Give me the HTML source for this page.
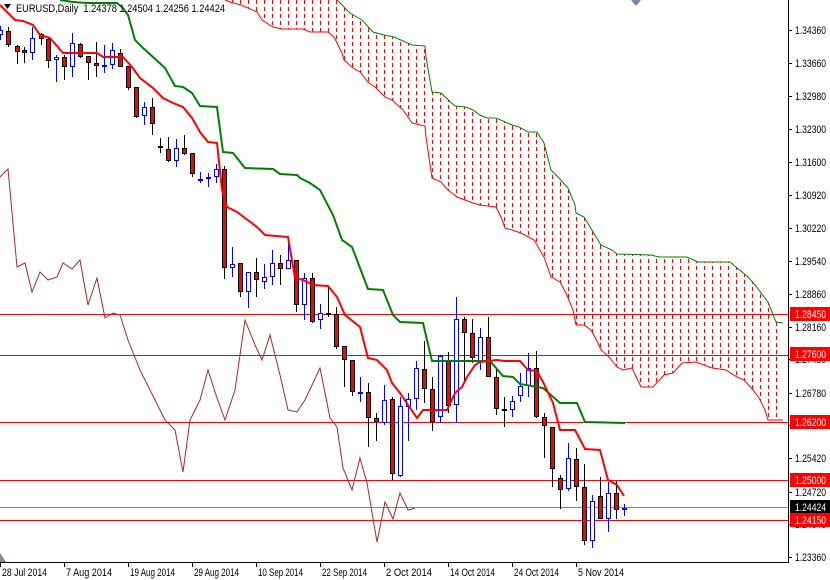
<!DOCTYPE html>
<html><head><meta charset="utf-8">
<style>
html,body{margin:0;padding:0;background:#fff;}
body{width:830px;height:580px;overflow:hidden;position:relative;font-family:"Liberation Sans",sans-serif;}
svg{position:absolute;left:0;top:0;}
svg text{font-family:"Liberation Sans",sans-serif;font-size:11px;}
</style></head>
<body>
<svg id="s" width="830" height="580" viewBox="0 0 830 580" xmlns="http://www.w3.org/2000/svg">
<defs>
<clipPath id="cl"><polygon id="cloudpoly" points=""/></clipPath>
</defs>
<g id="cloudlines" clip-path="url(#cl)"></g>
<g id="hl"></g>
<polyline id="spanB" fill="none" stroke="#008000" stroke-width="1"/>
<polyline id="spanA" fill="none" stroke="#ff0000" stroke-width="1"/>
<polyline id="chikou" fill="none" stroke="#a52a2a" stroke-width="1"/>
<g id="candles"></g>
<polyline id="kijun" fill="none" stroke="#008000" stroke-width="2"/>
<polyline id="tenkan" fill="none" stroke="#ff0000" stroke-width="2"/>
<line x1="788.5" y1="0" x2="788.5" y2="563" stroke="#000"/>
<line x1="0" y1="562.5" x2="789" y2="562.5" stroke="#000"/>
<g id="axis"></g>
<polygon points="4,4 11,4 7.5,9" fill="#000"/>
<text x="16" y="12" fill="#000" textLength="209" lengthAdjust="spacingAndGlyphs">EURUSD,Daily&#160;&#160;1.24378 1.24504 1.24256 1.24424</text>
<polygon points="631,0 641,0 636,6" fill="#7b8a9a"/>
<polygon points="0,553 0,562 6,562" fill="#7b8a9a"/>
</svg>
<script>
(function(){
var NS="http://www.w3.org/2000/svg";
var s=document.getElementById('s');
function el(t,a,p){var e=document.createElementNS(NS,t);for(var k in a)e.setAttribute(k,a[k]);(p||s).appendChild(e);return e;}
function pts(a){return a.map(function(p){return p.join(',');}).join(' ');}
var topE=[[225,0],[337,0],[350,13],[362,20],[373,32],[384,35],[394,37],[412,45],[425,46],[426,57],[432,92],[441,93],[455,106],[466,107],[473,110],[480,115],[487,118],[496,118],[512,125],[519,127],[528,132],[537,132],[544,143],[551,170],[559,178],[568,188],[575,205],[576,213],[584,217],[601,245],[612,250],[617,254],[651,255],[659,257],[687,257],[698,262],[730,262],[748,277],[755,285],[768,302],[776,322],[783,323]];
var botE=[[225,0],[230,2],[241,5],[257,12],[262,20],[273,27],[282,29],[303,29],[310,32],[328,32],[334,37],[342,53],[344,60],[353,68],[360,72],[368,82],[376,88],[385,97],[392,100],[403,110],[412,123],[425,126],[426,137],[432,178],[441,182],[448,190],[457,197],[473,203],[480,205],[496,207],[501,217],[505,228],[512,230],[521,233],[534,240],[537,245],[544,257],[551,277],[560,282],[566,293],[573,310],[576,325],[584,325],[591,330],[598,343],[601,350],[609,357],[617,367],[623,370],[632,368],[641,387],[653,387],[664,375],[673,373],[682,363],[696,362],[712,368],[726,370],[737,377],[744,380],[753,390],[759,398],[765,410],[768,420],[783,420]];
document.getElementById('cloudpoly').setAttribute('points',pts(topE.concat(botE.slice().reverse())));
var cg=document.getElementById('cloudlines');
for(var x=224;x<=784;x+=8){el('line',{x1:x+0.5,y1:0,x2:x+0.5,y2:430,stroke:'#ff0000','stroke-width':1,'stroke-dasharray':'4,3'},cg);}
document.getElementById('spanB').setAttribute('points',pts(topE.slice(1)));
document.getElementById('spanA').setAttribute('points',pts(botE));
var hg=document.getElementById('hl');
[[314,'#ff0000'],[355,'#ff0000'],[422,'#ff0000'],[480,'#ff0000'],[507,'#778899'],[520,'#ff0000']].forEach(function(h){el('line',{x1:0,y1:h[0]+0.5,x2:788,y2:h[0]+0.5,stroke:h[1]},hg);});
document.getElementById('chikou').setAttribute('points',pts([[0,177],[8,169],[17,267],[25,263],[32,292],[40,272],[48,280],[57,277],[63,263],[72,269],[80,260],[88,305],[97,278],[105,318],[113,313],[120,315],[128,340],[140,370],[155,400],[165,420],[175,430],[183,472],[190,420],[200,400],[208,370],[216,395],[225,420],[235,390],[245,320],[255,345],[262,360],[270,335],[280,375],[288,410],[297,412],[305,400],[320,368],[330,418],[337,427],[343,468],[352,490],[360,458],[367,483],[377,542],[385,502],[393,519],[400,493],[408,510],[415,508]]));
document.getElementById('tenkan').setAttribute('points',pts([[0,5],[15,20],[23,21],[33,25],[40,35],[50,38],[63,53],[97,53],[103,57],[123,57],[132,67],[140,78],[153,88],[163,98],[173,103],[183,107],[192,118],[200,132],[208,142],[217,143],[222,190],[227,207],[237,212],[245,218],[257,227],[265,235],[288,237],[295,278],[303,280],[313,285],[328,286],[337,297],[345,315],[360,327],[368,358],[377,360],[387,370],[392,383],[400,393],[408,405],[417,418],[423,410],[447,410],[455,393],[462,387],[467,377],[475,365],[480,362],[488,361],[497,360],[505,361],[520,361],[528,370],[537,371],[543,382],[553,403],[560,430],[575,430],[585,449],[600,450],[608,480],[617,485],[624,496]]));
document.getElementById('kijun').setAttribute('points',pts([[60,0],[73,2],[87,3],[117,3],[123,8],[128,15],[135,40],[143,48],[153,57],[165,68],[175,86],[183,87],[192,93],[200,106],[217,107],[223,152],[233,153],[245,168],[273,169],[280,174],[297,175],[300,178],[310,183],[320,190],[333,215],[342,240],[352,247],[368,289],[383,290],[393,315],[400,322],[423,323],[432,361],[490,361],[503,376],[513,377],[520,384],[543,388],[560,403],[577,403],[585,422],[625,423]]));
var C=[[0,30,35,26,40,'b'],[8,31,45,27,47,'r'],[17,46,52,45,64,'r'],[24,50,53,47,63,'r'],[32,38,53,27,60,'b'],[41,34,39,33,45,'r'],[48,39,61,37,68,'r'],[56,57,60,55,82,'b'],[64,57,67,55,80,'r'],[72,43,67,33,77,'b'],[80,44,57,43,58,'r'],[88,56,63,56,80,'r'],[96,63,66,42,77,'r'],[104,65,66,45,73,'b'],[112,50,65,43,69,'b'],[120,53,67,49,67,'r'],[128,66,88,66,90,'r'],[136,87,117,87,118,'r'],[144,107,116,102,125,'b'],[152,107,124,98,135,'r'],[160,146,148,138,153,'r'],[168,149,161,137,162,'r'],[176,148,161,139,167,'b'],[184,148,154,135,155,'r'],[192,153,174,153,177,'r'],[200,179,180,172,183,'b'],[208,177,179,173,187,'b'],[216,169,177,164,183,'b'],[224,169,268,166,279,'r'],[232,264,268,247,277,'b'],[240,263,292,263,297,'r'],[248,272,292,272,308,'b'],[256,272,280,258,297,'r'],[264,277,282,264,289,'b'],[272,263,277,250,285,'b'],[280,263,269,255,285,'r'],[288,260,269,243,269,'b'],[296,260,305,260,312,'r'],[304,278,305,273,320,'b'],[312,278,322,273,323,'r'],[320,313,320,304,329,'b'],[328,313,314,287,317,'r'],[336,314,347,307,349,'r'],[344,346,360,346,387,'r'],[352,360,392,360,396,'r'],[360,392,393,377,402,'b'],[368,392,418,383,447,'r'],[376,418,422,413,441,'r'],[384,400,423,385,425,'b'],[392,399,474,397,480,'r'],[400,406,476,397,477,'b'],[408,399,407,393,441,'b'],[416,368,399,361,410,'b'],[424,369,389,341,403,'r'],[432,389,422,377,431,'r'],[440,356,417,355,423,'b'],[448,361,406,352,413,'r'],[456,319,405,297,423,'b'],[464,319,333,317,383,'r'],[472,333,358,319,363,'r'],[480,337,361,328,370,'b'],[488,337,377,317,377,'r'],[496,377,409,369,415,'r'],[504,409,411,397,427,'r'],[512,401,410,396,417,'b'],[520,386,396,373,402,'b'],[528,368,386,353,397,'b'],[536,368,417,351,418,'r'],[544,417,426,413,458,'r'],[552,427,469,427,487,'r'],[560,478,490,475,509,'r'],[568,458,489,443,491,'b'],[576,459,487,448,501,'r'],[584,487,541,464,545,'r'],[592,501,541,495,548,'b'],[600,496,519,477,519,'r'],[608,493,519,482,532,'b'],[616,493,510,481,519,'r'],[624,508,510,504,516,'b']];
var cg2=document.getElementById('candles');
C.forEach(function(c){var x=c[0],bt=c[1],bb=c[2],h=c[3],l=c[4],col=c[5];var ol=col==='r'?'#000':'#0000ff';
el('rect',{x:x,y:h,width:1,height:Math.max(1,l-h),fill:ol},cg2);
var hh=Math.max(2,bb-bt);
el('rect',{x:x-2,y:bt,width:5,height:hh,fill:ol},cg2);
if(hh>2)el('rect',{x:x-1,y:bt+1,width:3,height:hh-2,fill:col==='r'?'#ff0000':'#fff'},cg2);
});
var ag=document.getElementById('axis');
[['1.34360',30],['1.33660',63],['1.32980',96],['1.32300',129],['1.31600',162],['1.30920',195],['1.30220',228],['1.29540',261],['1.28860',294],['1.28160',327],['1.27480',359],['1.26780',393],['1.26100',425],['1.25420',458],['1.24720',492],['1.24040',524],['1.23360',557]].forEach(function(a){
el('line',{x1:788,y1:a[1]+0.5,x2:792,y2:a[1]+0.5,stroke:'#000'},ag);
el('text',{x:795,y:a[1]+4,fill:'#000',textLength:31,lengthAdjust:'spacingAndGlyphs'},ag).textContent=a[0];});
[['1.28450',314,'#ff0000'],['1.27600',354,'#ff0000'],['1.26200',422,'#ff0000'],['1.25000',480,'#ff0000'],['1.24424',507,'#000'],['1.24150',520,'#ff0000']].forEach(function(a){
el('rect',{x:790,y:a[1]-7,width:40,height:14,fill:a[2]},ag);
el('text',{x:795,y:a[1]+4,fill:'#fff',textLength:31,lengthAdjust:'spacingAndGlyphs'},ag).textContent=a[0];});
[['28 Jul 2014',0],['7 Aug 2014',64],['19 Aug 2014',128],['29 Aug 2014',192],['10 Sep 2014',256],['22 Sep 2014',320],['2 Oct 2014',384],['14 Oct 2014',448],['24 Oct 2014',512],['5 Nov 2014',576]].forEach(function(d){
el('line',{x1:d[1]+0.5,y1:562,x2:d[1]+0.5,y2:567,stroke:'#000'},ag);
el('text',{x:d[1]+2,y:576,fill:'#000',textLength:d[0].length>10?45:46,lengthAdjust:'spacingAndGlyphs'},ag).textContent=d[0];});
})();
</script>
</body></html>
